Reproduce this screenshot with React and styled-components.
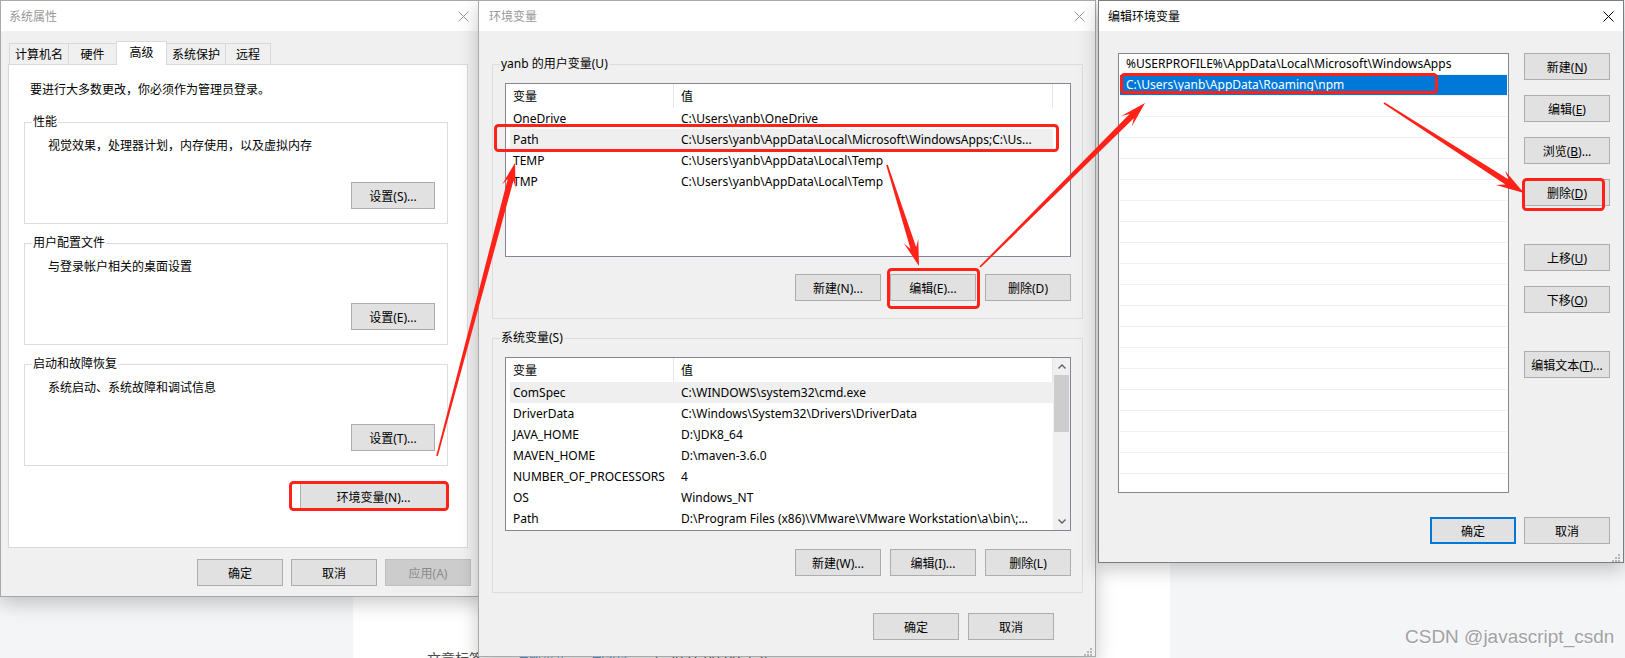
import styled, { createGlobalStyle } from "styled-components";

const UI_FONT = `"Noto Sans", "Noto Sans CJK SC", sans-serif`;
const RED = "#ff2219";

const GlobalStyle = createGlobalStyle`
  html, body { margin: 0; padding: 0; background: #f4f5f7; }
  body { font-family: ${UI_FONT}; font-size: 12px; color: #000; }
  * { box-sizing: border-box; }
`;

const Desktop = styled.div`
  position: relative;
  width: 1625px;
  height: 658px;
  overflow: hidden;
`;

const Page = styled.div`
  display: grid;
  grid-template-columns: 353px 817px 1fr;
  height: 100%;
`;

const Gutter = styled.div`
  background: #f4f5f7;
`;

const Article = styled.div`
  background: #fff;
  display: flex;
  align-items: flex-end;
  padding-left: 74px;
`;

const TagLine = styled.div`
  display: flex;
  gap: 22px;
  margin-bottom: -11px;
  font-size: 14px;
  line-height: 20px;
  color: #4d4d4d;
`;

const Tag = styled.span`
  color: #5094d5;
`;

const Window = styled.div`
  position: absolute;
  left: ${(p) => p.$x}px;
  top: ${(p) => p.$y}px;
  width: ${(p) => p.$w}px;
  height: ${(p) => p.$h}px;
  display: flex;
  flex-direction: column;
  background: #f0f0f0;
  border: 1px solid ${(p) => (p.$active ? "#7d7d7d" : "#a9a9a9")};
  box-shadow: 0 6px 18px rgba(0, 0, 0, 0.22);
`;

const TitleBar = styled.div`
  flex: none;
  height: 30px;
  display: flex;
  align-items: center;
  justify-content: space-between;
  padding-left: ${(p) => p.$pad}px;
  background: #fff;
`;

const Title = styled.span`
  color: ${(p) => (p.$active ? "#000" : "#999")};
`;

const CloseBtn = styled.div`
  width: ${(p) => p.$w}px;
  height: 30px;
  display: flex;
  align-items: center;
  justify-content: center;
`;

const Button = styled.button`
  flex: none;
  width: ${(p) => p.$w || 86}px;
  height: 27px;
  padding: 0;
  font: inherit;
  color: ${(p) => (p.disabled ? "#8a8a8a" : "#000")};
  background: ${(p) => (p.disabled ? "#cccccc" : "#e1e1e1")};
  border: ${(p) =>
    p.$default
      ? "2px solid #0078d7"
      : `1px solid ${p.disabled ? "#bfbfbf" : "#adadad"}`};
  border-radius: 0;
  white-space: nowrap;
`;

const ButtonRow = styled.div`
  display: flex;
  justify-content: flex-end;
  gap: ${(p) => p.$gap || 9}px;
  margin-top: ${(p) => p.$mt}px;
  padding-right: ${(p) => p.$pr || 0}px;
`;

/* group box (fieldset + legend) shared by both property dialogs */

const Group = styled.fieldset`
  margin: ${(p) => p.$mt}px 0 0;
  padding: 0;
  min-width: 0;
  border: 1px solid #dcdcdc;
`;

const Legend = styled.legend`
  margin-left: 7px;
  padding: 0 1px;
  line-height: 16px;
`;

const GroupInner = styled.div`
  display: flex;
  flex-direction: column;
  padding: ${(p) => p.$pad};
`;

/* ---------- 系统属性 ---------- */

const PropsBody = styled.div`
  flex: 1;
  display: flex;
  flex-direction: column;
  padding: 12px 0 0 7px;
`;

const TabStrip = styled.div`
  display: flex;
  align-items: flex-end;
  height: 21px;
  margin-left: 2px;
`;

const Tab = styled.div`
  position: relative;
  width: ${(p) => p.$w}px;
  height: ${(p) => (p.$active ? 24 : 21)}px;
  margin-bottom: ${(p) => (p.$active ? -1 : 0)}px;
  margin-left: -1px;
  z-index: ${(p) => (p.$active ? 1 : 0)};
  display: flex;
  align-items: center;
  justify-content: center;
  padding-bottom: ${(p) => (p.$active ? 3 : 0)}px;
  background: ${(p) => (p.$active ? "#fff" : "#f0f0f0")};
  border: 1px solid #d9d9d9;
  border-bottom: none;
`;

const TabPanel = styled.div`
  width: 460px;
  height: 484px;
  display: flex;
  flex-direction: column;
  padding: 17px 19px 0 15px;
  background: #fff;
  border: 1px solid #d9d9d9;
`;

const Notice = styled.div`
  line-height: 16px;
  padding-left: 6px;
`;

const GroupText = styled.div`
  line-height: 16px;
  padding-left: 11px;
`;

const GroupButton = styled(Button)`
  align-self: flex-end;
  margin-top: 28px;
`;

const EnvButtonWrap = styled.div`
  display: flex;
  justify-content: flex-end;
  margin: 17px 1px 0 0;
`;

/* ---------- 环境变量 ---------- */

const EnvBody = styled.div`
  flex: 1;
  display: flex;
  flex-direction: column;
  padding: 25px 12px 0 13px;
`;

const ListBox = styled.div`
  flex: none;
  width: ${(p) => p.$w}px;
  height: ${(p) => p.$h}px;
  display: flex;
  overflow: hidden;
  background: #fff;
  border: 1px solid #828790;
`;

const ListMain = styled.div`
  width: 547px;
  flex: none;
  display: flex;
  flex-direction: column;
`;

const HeaderRow = styled.div`
  flex: none;
  height: 24px;
  display: grid;
  grid-template-columns: 168px 1fr;
`;

const HeaderCell = styled.div`
  display: flex;
  align-items: center;
  padding-left: 7px;
  border-right: 1px solid #e5e5e5;
`;

const RowList = styled.div`
  padding-left: 4px;
`;

const VarRow = styled.div`
  height: 21px;
  display: grid;
  grid-template-columns: 164px 1fr;
  align-items: center;
  background: ${(p) => (p.$hl ? "#efefef" : "transparent")};
`;

const Cell = styled.div`
  padding-left: ${(p) => p.$pad}px;
  white-space: nowrap;
  overflow: hidden;
`;

const ScrollTrack = styled.div`
  width: 17px;
  flex: none;
  display: flex;
  flex-direction: column;
  background: ${(p) => (p.$empty ? "#fff" : "#f0f0f0")};
`;

const ScrollArrow = styled.div`
  height: 17px;
  flex: none;
  display: flex;
  align-items: center;
  justify-content: center;
`;

const ScrollThumb = styled.div`
  height: 57px;
  flex: none;
  margin: 0 1px;
  background: #cdcdcd;
`;

const ScrollSpace = styled.div`
  flex: 1;
`;

/* ---------- 编辑环境变量 ---------- */

const EditBody = styled.div`
  flex: 1;
  display: flex;
  flex-direction: column;
  padding: 22px 13px 0 19px;
`;

const EditMain = styled.div`
  display: flex;
  gap: 15px;
`;

const PathListBox = styled.div`
  width: 391px;
  height: 440px;
  flex: none;
  overflow: hidden;
  padding: 0 1px;
  background: #fff;
  border: 1px solid #828790;
`;

const PathRow = styled.div`
  height: 21px;
  line-height: 20px;
  padding-left: 6px;
  white-space: nowrap;
  color: ${(p) => (p.$sel ? "#fff" : "#000")};
  background: ${(p) => (p.$sel ? "#0078d7" : "transparent")};
  border-bottom: 1px solid #f0f0f0;
`;

const SideButtons = styled.div`
  display: flex;
  flex-direction: column;
`;

const SideButton = styled(Button)`
  margin-top: ${(p) => p.$mt}px;
`;

const GripBox = styled.div`
  position: absolute;
  right: 2px;
  bottom: 2px;
  width: 10px;
  height: 10px;
`;

const Annotations = styled.svg`
  position: absolute;
  left: 0;
  top: 0;
  z-index: 10;
  pointer-events: none;
`;

const Watermark = styled.div`
  position: absolute;
  left: 1405px;
  top: 626px;
  z-index: 11;
  font-family: "Liberation Sans", Arial, sans-serif;
  font-size: 19px;
  line-height: 22px;
  color: #a2a2a2;
  text-shadow: 1px 1px 1px rgba(255, 255, 255, 0.9);
  white-space: nowrap;
`;

/* ---------- icons ---------- */

const CloseIcon = ({ color }) => (
  <svg width="11" height="11" viewBox="0 0 11 11">
    <path d="M0.5 0.5L10.5 10.5M10.5 0.5L0.5 10.5" stroke={color} strokeWidth="1" />
  </svg>
);

const Chevron = ({ up }) => (
  <svg width="8" height="5" viewBox="0 0 8 5">
    <path
      d={up ? "M0.5 4.5L4 1L7.5 4.5" : "M0.5 0.5L4 4L7.5 0.5"}
      fill="none"
      stroke="#606060"
      strokeWidth="1.4"
    />
  </svg>
);

const Grip = () => (
  <GripBox>
    <svg width="10" height="10" viewBox="0 0 10 10">
      {[
        [8, 2],
        [8, 5],
        [5, 5],
        [8, 8],
        [5, 8],
        [2, 8],
      ].map(([x, y]) => (
        <rect key={`${x}-${y}`} x={x - 1} y={y - 1} width="2" height="2" fill="#b5b5b5" />
      ))}
    </svg>
  </GripBox>
);

function arrowPoints([x1, y1], [x2, y2], head = 15, len = 24) {
  const dx = x2 - x1;
  const dy = y2 - y1;
  const l = Math.hypot(dx, dy);
  const ux = dx / l;
  const uy = dy / l;
  const nx = -uy;
  const ny = ux;
  const at = (d, w) => [x2 - ux * d + nx * w, y2 - uy * d + ny * w];
  const tail = (w) => [x1 + nx * w, y1 + ny * w];
  const pts = [
    tail(0.8),
    at(len * 0.72, 3),
    at(len, head / 2),
    [x2, y2],
    at(len, -head / 2),
    at(len * 0.72, -3),
    tail(-0.8),
  ];
  return pts.map((p) => p.map((v) => v.toFixed(1)).join(",")).join(" ");
}

const redBoxes = [
  [289, 481, 449, 511],
  [494, 124, 1059, 152],
  [887, 268, 980, 309],
  [1120, 73, 1438, 94],
  [1522, 178, 1605, 211],
];

const redArrows = [
  [[437, 456], [515, 163], 14, 24],
  [[887, 165], [919, 266], 15, 26],
  [[980, 267], [1145, 103], 15, 26],
  [[1384, 103], [1524, 193], 17, 28],
];

/* ---------- data ---------- */

const tabs = [
  ["计算机名", 60],
  ["硬件", 49],
  ["高级", 51, true],
  ["系统保护", 60],
  ["远程", 46],
];

const groups = [
  ["性能", "视觉效果，处理器计划，内存使用，以及虚拟内存", "设置(S)...", 16],
  ["用户配置文件", "与登录帐户相关的桌面设置", "设置(E)...", 11],
  ["启动和故障恢复", "系统启动、系统故障和调试信息", "设置(T)...", 11],
];

const userVars = [
  ["OneDrive", "C:\\Users\\yanb\\OneDrive"],
  ["Path", "C:\\Users\\yanb\\AppData\\Local\\Microsoft\\WindowsApps;C:\\Us...", true],
  ["TEMP", "C:\\Users\\yanb\\AppData\\Local\\Temp"],
  ["TMP", "C:\\Users\\yanb\\AppData\\Local\\Temp"],
];

const systemVars = [
  ["ComSpec", "C:\\WINDOWS\\system32\\cmd.exe", true],
  ["DriverData", "C:\\Windows\\System32\\Drivers\\DriverData"],
  ["JAVA_HOME", "D:\\JDK8_64"],
  ["MAVEN_HOME", "D:\\maven-3.6.0"],
  ["NUMBER_OF_PROCESSORS", "4"],
  ["OS", "Windows_NT"],
  ["Path", "D:\\Program Files (x86)\\VMware\\VMware Workstation\\a\\bin\\;..."],
];

const paths = [
  "%USERPROFILE%\\AppData\\Local\\Microsoft\\WindowsApps",
  "C:\\Users\\yanb\\AppData\\Roaming\\npm",
  ...Array(19).fill(""),
];

const sideButtons = [
  ["新建(", "N", ")", 0],
  ["编辑(", "E", ")", 15],
  ["浏览(", "B", ")...", 15],
  ["删除(", "D", ")", 15],
  ["上移(", "U", ")", 38],
  ["下移(", "O", ")", 15],
  ["编辑文本(", "T", ")...", 38],
];

function VarList({ rows, scroll }) {
  return (
    <ListBox $w={566} $h={174}>
      <ListMain>
        <HeaderRow>
          <HeaderCell>变量</HeaderCell>
          <HeaderCell>值</HeaderCell>
        </HeaderRow>
        <RowList>
          {rows.map(([name, value, hl]) => (
            <VarRow key={name + value} $hl={hl}>
              <Cell $pad={3}>{name}</Cell>
              <Cell $pad={7}>{value}</Cell>
            </VarRow>
          ))}
        </RowList>
      </ListMain>
      {scroll ? (
        <ScrollTrack>
          <ScrollArrow>
            <Chevron up />
          </ScrollArrow>
          <ScrollThumb />
          <ScrollSpace />
          <ScrollArrow>
            <Chevron />
          </ScrollArrow>
        </ScrollTrack>
      ) : (
        <ScrollTrack $empty />
      )}
    </ListBox>
  );
}

function App() {
  return (
    <Desktop>
      <GlobalStyle />
      <Page>
        <Gutter />
        <Article>
          <TagLine>
            <span>文章标签：</span>
            <Tag>#数据库</Tag>
            <Tag>#java</Tag>
            <span>于 2021-09-09 发布</span>
          </TagLine>
        </Article>
        <Gutter />
      </Page>

      <Window $x={0} $y={0} $w={487} $h={597}>
        <TitleBar $pad={8}>
          <Title>系统属性</Title>
          <CloseBtn $w={46}>
            <CloseIcon color="#9a9a9a" />
          </CloseBtn>
        </TitleBar>
        <PropsBody>
          <TabStrip>
            {tabs.map(([label, w, active]) => (
              <Tab key={label} $w={w} $active={active}>
                {label}
              </Tab>
            ))}
          </TabStrip>
          <TabPanel>
            <Notice>要进行大多数更改，你必须作为管理员登录。</Notice>
            {groups.map(([legend, text, btn, mt]) => (
              <Group key={legend} $mt={mt}>
                <Legend>{legend}</Legend>
                <GroupInner $pad="8px 12px 14px 12px">
                  <GroupText>{text}</GroupText>
                  <GroupButton $w={84}>{btn}</GroupButton>
                </GroupInner>
              </Group>
            ))}
            <EnvButtonWrap>
              <Button $w={147}>环境变量(N)...</Button>
            </EnvButtonWrap>
          </TabPanel>
          <ButtonRow $mt={11} $gap={8} $pr={15}>
            <Button>确定</Button>
            <Button>取消</Button>
            <Button disabled>应用(A)</Button>
          </ButtonRow>
        </PropsBody>
      </Window>

      <Window $x={478} $y={0} $w={618} $h={657}>
        <TitleBar $pad={10}>
          <Title>环境变量</Title>
          <CloseBtn $w={32}>
            <CloseIcon color="#9a9a9a" />
          </CloseBtn>
        </TitleBar>
        <EnvBody>
          <Group $mt={0}>
            <Legend>yanb 的用户变量(U)</Legend>
            <GroupInner $pad="11px 11px 17px 12px">
              <VarList rows={userVars} />
              <ButtonRow $mt={17}>
                <Button>新建(N)...</Button>
                <Button>编辑(E)...</Button>
                <Button>删除(D)</Button>
              </ButtonRow>
            </GroupInner>
          </Group>
          <Group $mt={11}>
            <Legend>系统变量(S)</Legend>
            <GroupInner $pad="11px 11px 16px 12px">
              <VarList rows={systemVars} scroll />
              <ButtonRow $mt={18}>
                <Button>新建(W)...</Button>
                <Button>编辑(I)...</Button>
                <Button>删除(L)</Button>
              </ButtonRow>
            </GroupInner>
          </Group>
          <ButtonRow $mt={20} $pr={29}>
            <Button>确定</Button>
            <Button>取消</Button>
          </ButtonRow>
        </EnvBody>
        <Grip />
      </Window>

      <Window $x={1098} $y={0} $w={526} $h={563} $active>
        <TitleBar $pad={9}>
          <Title $active>编辑环境变量</Title>
          <CloseBtn $w={30}>
            <CloseIcon color="#000" />
          </CloseBtn>
        </TitleBar>
        <EditBody>
          <EditMain>
            <PathListBox>
              {paths.map((p, i) => (
                <PathRow key={i} $sel={i === 1}>
                  {p}
                </PathRow>
              ))}
            </PathListBox>
            <SideButtons>
              {sideButtons.map(([a, key, b, mt]) => (
                <SideButton key={a + key} $mt={mt}>
                  {a}
                  <u>{key}</u>
                  {b}
                </SideButton>
              ))}
            </SideButtons>
          </EditMain>
          <ButtonRow $mt={24} $gap={8}>
            <Button $default>确定</Button>
            <Button>取消</Button>
          </ButtonRow>
        </EditBody>
        <Grip />
      </Window>

      <Annotations width="1625" height="658" viewBox="0 0 1625 658">
        {redBoxes.map(([x0, y0, x1, y1]) => (
          <rect
            key={`${x0}-${y0}`}
            x={x0 + 1.5}
            y={y0 + 1.5}
            width={x1 - x0 - 3}
            height={y1 - y0 - 3}
            rx="3"
            fill="none"
            stroke={RED}
            strokeWidth="3"
          />
        ))}
        {redArrows.map(([from, to, head, len]) => (
          <polygon key={`${from}`} points={arrowPoints(from, to, head, len)} fill={RED} />
        ))}
      </Annotations>

      <Watermark>CSDN @javascript_csdn</Watermark>
    </Desktop>
  );
}

export default App;
